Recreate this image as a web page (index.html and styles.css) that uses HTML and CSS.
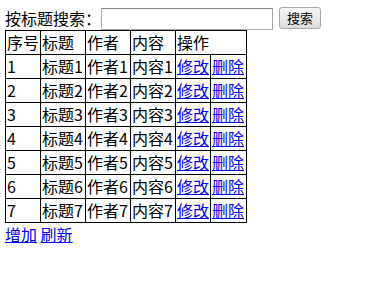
FILE: index.html
```html
<!DOCTYPE html>
<html lang="zh">
<head>
<meta charset="utf-8">
<title>列表</title>
<link rel="stylesheet" href="styles.css">
</head>
<body>
<form class="search">
  <span class="search-label">按标题搜索：</span><input class="search-input" type="text"><button class="search-btn" type="button">搜索</button>
</form>
<table class="list">
  <colgroup>
    <col class="c-id"><col class="c-title"><col class="c-author"><col class="c-content"><col class="c-edit"><col class="c-del">
  </colgroup>
  <tr><td>序号</td><td>标题</td><td>作者</td><td>内容</td><td colspan="2">操作</td></tr>
  <tr><td>1</td><td>标题1</td><td>作者1</td><td>内容1</td><td><a href="#">修改</a></td><td><a href="#">删除</a></td></tr>
  <tr><td>2</td><td>标题2</td><td>作者2</td><td>内容2</td><td><a href="#">修改</a></td><td><a href="#">删除</a></td></tr>
  <tr><td>3</td><td>标题3</td><td>作者3</td><td>内容3</td><td><a href="#">修改</a></td><td><a href="#">删除</a></td></tr>
  <tr><td>4</td><td>标题4</td><td>作者4</td><td>内容4</td><td><a href="#">修改</a></td><td><a href="#">删除</a></td></tr>
  <tr><td>5</td><td>标题5</td><td>作者5</td><td>内容5</td><td><a href="#">修改</a></td><td><a href="#">删除</a></td></tr>
  <tr><td>6</td><td>标题6</td><td>作者6</td><td>内容6</td><td><a href="#">修改</a></td><td><a href="#">删除</a></td></tr>
  <tr><td>7</td><td>标题7</td><td>作者7</td><td>内容7</td><td><a href="#">修改</a></td><td><a href="#">删除</a></td></tr>
</table>
<div class="actions"><a href="#">增加</a> <a href="#">刷新</a></div>
</body>
</html>
```
FILE: styles.css
```css
html, body {
  background: #fff;
}
body {
  margin: 7px 5px 0 5px;
  font-family: "Noto Sans CJK SC", "Microsoft YaHei", sans-serif;
  font-size: 16px;
  line-height: 21px;
  color: #000;
}
a {
  color: #0000ee;
  text-decoration: underline;
}
.search {
  display: flex;
  align-items: flex-start;
  height: 23px;
  margin: 0;
}
.search-label {
  line-height: 23px;
  width: 96px;
  white-space: nowrap;
}
.search-input {
  box-sizing: border-box;
  width: 172px;
  height: 22px;
  margin: 1px 0 0 0;
  padding: 1px 2px;
  border: 1px solid #a9a9a9;
  border-top-color: #8a8a8a;
  background: #fff;
  font-size: 13px;
}
.search-btn {
  box-sizing: border-box;
  height: 22px;
  width: 42px;
  margin: 0 0 0 6px;
  padding: 0;
  border: 1px solid #a8a8a8;
  border-radius: 3px;
  background: linear-gradient(#f6f6f6, #dedede);
  font-family: "Noto Sans CJK SC", "Microsoft YaHei", sans-serif;
  font-size: 13px;
  line-height: 18px;
  color: #000;
}
.list {
  border-collapse: collapse;
  table-layout: fixed;
  width: 242px;
}
.list td {
  border: 1px solid #000;
  padding: 1px 0 1px 1px;
  line-height: 21px;
  white-space: nowrap;
  overflow: hidden;
}
.c-id { width: 35px; }
.c-title { width: 45px; }
.c-author { width: 45px; }
.c-content { width: 45px; }
.c-edit { width: 35px; }
.c-del { width: 36px; }
.actions {
  line-height: 21px;
  padding-top: 1px;
}
```
